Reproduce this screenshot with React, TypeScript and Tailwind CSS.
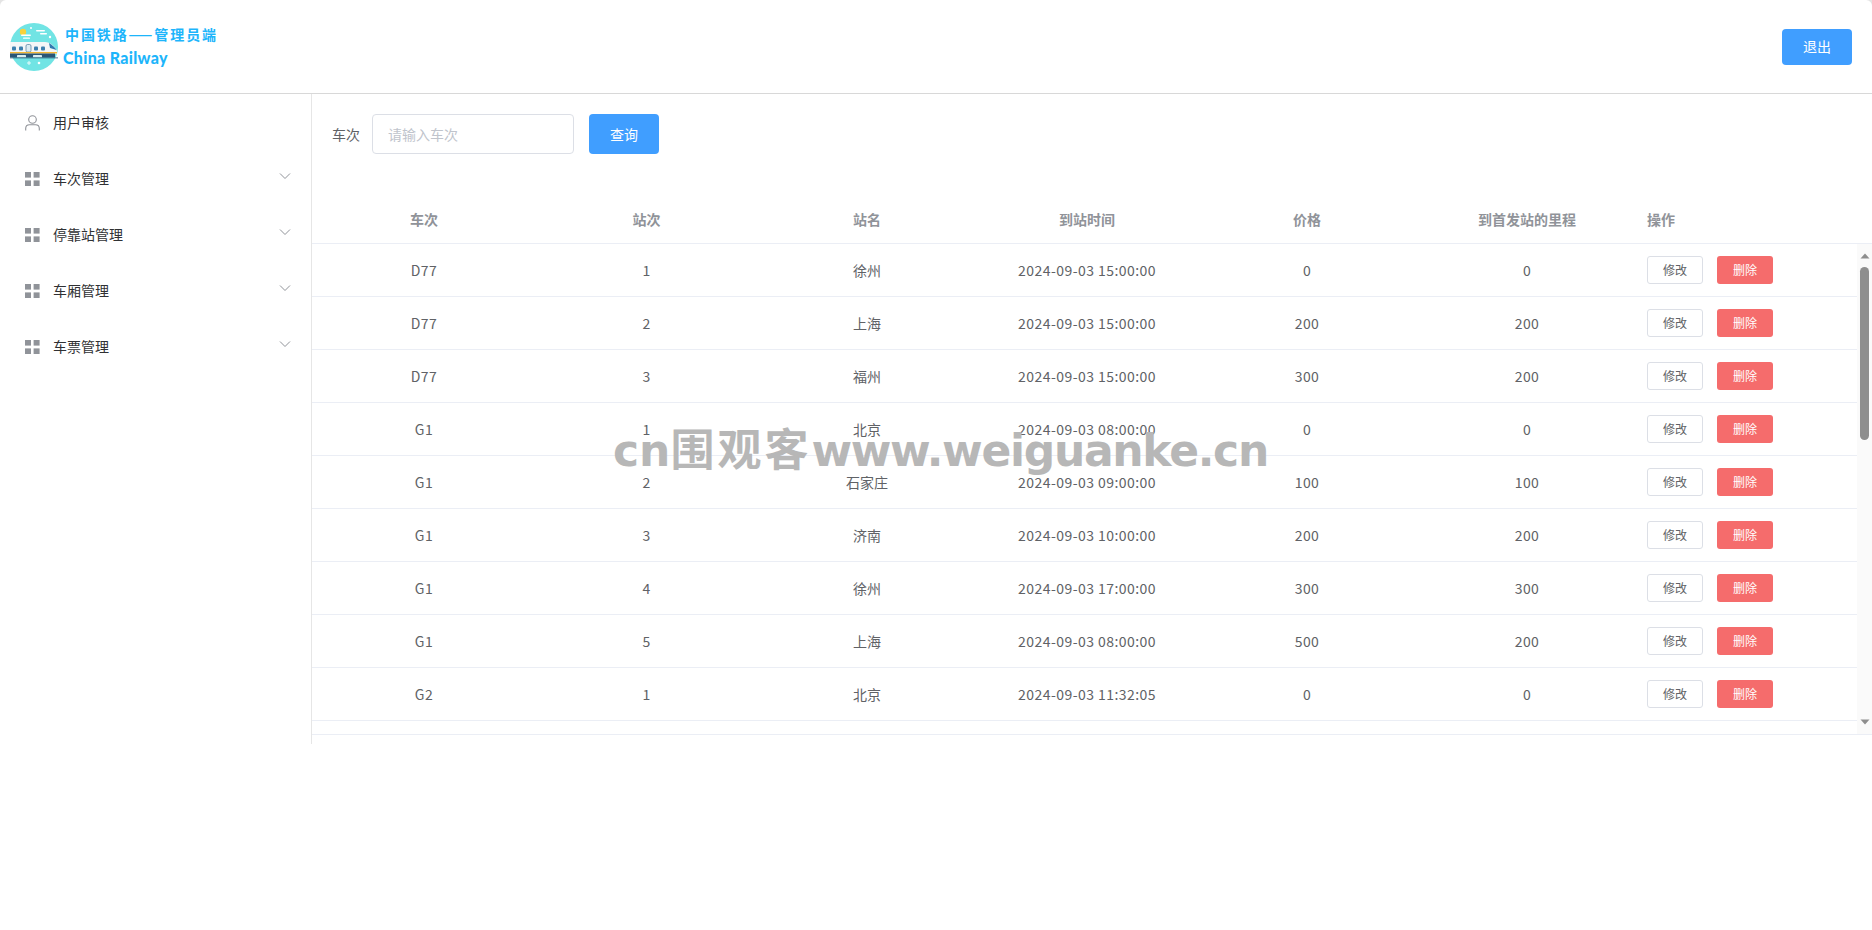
import React from "react";

const rows: (string | number)[][] = [
  ["D77", 1, "徐州", "2024-09-03 15:00:00", 0, 0],
  ["D77", 2, "上海", "2024-09-03 15:00:00", 200, 200],
  ["D77", 3, "福州", "2024-09-03 15:00:00", 300, 200],
  ["G1", 1, "北京", "2024-09-03 08:00:00", 0, 0],
  ["G1", 2, "石家庄", "2024-09-03 09:00:00", 100, 100],
  ["G1", 3, "济南", "2024-09-03 10:00:00", 200, 200],
  ["G1", 4, "徐州", "2024-09-03 17:00:00", 300, 300],
  ["G1", 5, "上海", "2024-09-03 08:00:00", 500, 200],
  ["G2", 1, "北京", "2024-09-03 11:32:05", 0, 0],
];

const headers = ["车次", "站次", "站名", "到站时间", "价格", "到首发站的里程"];
const menus = ["车次管理", "停靠站管理", "车厢管理", "车票管理"];

function GridIcon() {
  return (
    <svg width="15" height="14" viewBox="0 0 15 14" className="shrink-0" fill="#909399">
      <rect x="0" y="0" width="6" height="5.6" />
      <rect x="8.6" y="0" width="6" height="5.6" />
      <rect x="0" y="8.4" width="6" height="5.6" />
      <rect x="8.6" y="8.4" width="6" height="5.6" />
    </svg>
  );
}

function Chevron() {
  return (
    <svg width="12" height="12" viewBox="0 0 12 12" fill="none" stroke="#909399" strokeWidth="1" className="shrink-0 -translate-y-[3px]">
      <path d="M1 3.5 L6 8.5 L11 3.5" />
    </svg>
  );
}

function UserIcon() {
  return (
    <svg width="15" height="16" viewBox="0 0 15 16" fill="none" stroke="#909399" strokeWidth="1.1" className="shrink-0">
      <circle cx="7.5" cy="4.5" r="3.8" />
      <path d="M0.7 15.5 V13.5 C0.7 11 2.5 9.7 4.5 9.7 H10.5 C12.5 9.7 14.3 11 14.3 13.5 V15.5" />
    </svg>
  );
}

function Logo() {
  return (
    <svg width="50" height="50" viewBox="0 0 50 50" className="shrink-0">
      <defs>
        <clipPath id="c">
          <circle cx="25" cy="25" r="24" />
        </clipPath>
      </defs>
      <circle cx="25" cy="25" r="24" fill="#71e4e4" />
      <g clipPath="url(#c)">
        <circle cx="14" cy="10" r="3.2" fill="#f8d23a" />
        <rect x="12" y="12.5" width="10" height="1.6" rx="0.8" fill="#ffffff" />
        <rect x="14" y="15.5" width="7" height="1.3" rx="0.6" fill="#ffffff" />
        <rect x="27" y="8" width="9" height="1.6" rx="0.8" fill="#ffffff" />
        <rect x="31" y="11" width="7" height="1.4" rx="0.7" fill="#ffffff" />
        <circle cx="22" cy="6" r="1" fill="#ffffff" />
        <circle cx="41" cy="15" r="1.2" fill="#ffffff" />
        <path d="M18 41 h4 M20 39 v4" stroke="#ffffff" strokeWidth="0.8" />
        <circle cx="30" cy="41" r="1.3" fill="#ffffff" />
      </g>
      <path d="M1 20 H36 C41 20 46 24 48 29 V32 H1 Z" fill="#f4f6f7" />
      <path d="M40 21 C43 23 46 25 47.5 28 L41 26 Z" fill="#2f7ab0" />
      <rect x="3" y="24.5" width="4" height="4" rx="1" fill="#3c7fae" />
      <rect x="10" y="24.5" width="4" height="4" rx="1" fill="#3c7fae" />
      <rect x="17" y="22.5" width="5" height="7.5" rx="1.5" fill="#dcebf3" stroke="#34678c" strokeWidth="0.6" />
      <rect x="25" y="24.5" width="4" height="4" rx="1" fill="#3c7fae" />
      <rect x="32" y="24.5" width="4" height="4" rx="1" fill="#3c7fae" />
      <rect x="1" y="30" width="47" height="1.5" fill="#f2b632" />
      <rect x="1" y="31.5" width="45" height="4" fill="#2a5675" />
      <rect x="8" y="33" width="9" height="2.5" rx="0.6" fill="#d8eef2" />
      <rect x="24" y="33" width="9" height="2.5" rx="0.6" fill="#d8eef2" />
      <rect x="1" y="35.5" width="48" height="0.8" fill="#2a5675" />
    </svg>
  );
}

const colClass = [
  "w-[224px]",
  "w-[221px]",
  "w-[220px]",
  "w-[220px]",
  "w-[220px]",
  "w-[220px]",
];

function Ops({ labelled }: { labelled: boolean }) {
  return (
    <div className="pl-[10px] flex gap-[14px]">
      <button className="w-[56px] h-[28px] rounded-[3px] border border-[#dcdfe6] bg-white text-[12px] text-[#606266]">{labelled ? "修改" : ""}</button>
      <button className="w-[56px] h-[28px] rounded-[3px] bg-[#f56c6c] text-[12px] text-white">{labelled ? "删除" : ""}</button>
    </div>
  );
}

export default function App() {
  return (
    <div className="w-[1872px] h-[930px] bg-[#e4e4e4] overflow-hidden relative font-['Noto_Sans_CJK_SC',sans-serif] text-[14px]">
      <div className="h-full bg-white rounded-t-[6px]">
        <header className="h-[94px] border-b border-[#d8d8d8] flex items-center justify-between pl-[9px] pr-[20px]">
          <div className="flex items-center gap-[4px]">
            <Logo />
            <div className="flex flex-col text-[#1db5fb] font-bold -mt-[1px]">
              <span className="text-[14px] leading-[24px] tracking-[1.9px] pl-[2px]">中国铁路——管理员端</span>
              <span className="text-[16px] leading-[24px] tracking-[0.3px] font-['Lato',sans-serif] font-black">China Railway</span>
            </div>
          </div>
          <button className="w-[70px] h-[36px] rounded-[4px] bg-[#409eff] text-white text-[14px]">退出</button>
        </header>
        <div className="flex h-[650px]">
          <aside className="w-[312px] shrink-0 border-r border-[#e6e6e6] pt-[1px] text-[#303133]">
            <div className="h-[56px] flex items-center pl-[25px] gap-[13px] pr-[20px]">
              <UserIcon />
              <span className="-translate-y-[1px]">用户审核</span>
            </div>
            {menus.map((m) => (
              <div key={m} className="h-[56px] flex items-center pl-[25px] pr-[20px]">
                <GridIcon />
                <span className="ml-[13px] flex-1 -translate-y-[1px]">{m}</span>
                <Chevron />
              </div>
            ))}
          </aside>
          <main className="flex-1 min-w-0 flex flex-col">
            <div className="h-[103px] shrink-0 pl-[20px] pt-[20px] flex items-start">
              <span className="text-[#606266] h-[40px] leading-[40px] mr-[12px]">车次</span>
              <div className="w-[202px] h-[40px] rounded-[4px] border border-[#dcdfe6] px-[15px] flex items-center text-[#c0c4cc]">请输入车次</div>
              <button className="ml-[15px] w-[70px] h-[40px] rounded-[4px] bg-[#409eff] text-white">查询</button>
            </div>
            <div className="h-[47px] shrink-0 flex items-center border-b border-[#ebeef5] font-bold text-[#909399]">
              {headers.map((h, i) => (
                <div key={h} className={`${colClass[i]} shrink-0 text-center -translate-y-[1px]`}>{h}</div>
              ))}
              <div className="pl-[10px] -translate-y-[1px]">操作</div>
            </div>
            <div className="h-[491px] shrink-0 flex border-b border-[#ebeef5]">
              <div className="flex-1 min-w-0 overflow-hidden">
                {rows.map((r, idx) => (
                  <div key={idx} className="h-[53px] shrink-0 flex items-center border-b border-[#ebeef5] text-[#606266]">
                    {r.map((c, i) => (
                      <div key={i} className={`${colClass[i]} shrink-0 text-center ${i === 2 ? "" : "tracking-[0.45px]"}`}>{c}</div>
                    ))}
                    <Ops labelled />
                  </div>
                ))}
                <div className="h-[53px] flex items-center">
                  <div className="w-[1325px] shrink-0" />
                  <Ops labelled={false} />
                </div>
              </div>
              <div className="w-[15px] shrink-0 bg-[#fafafa] flex flex-col items-center">
                <svg width="10" height="6" viewBox="0 0 10 6" className="mt-[9px] shrink-0" fill="#8e8e8e"><path d="M5 0.5 L9.5 5.5 H0.5 Z" /></svg>
                <div className="w-[9px] h-[173px] rounded-[5px] bg-[#8e8e8e] mt-[8px]" />
                <div className="flex-1" />
                <svg width="10" height="6" viewBox="0 0 10 6" className="mb-[9px] shrink-0" fill="#8e8e8e"><path d="M5 5.5 L9.5 0.5 H0.5 Z" /></svg>
              </div>
            </div>
          </main>
        </div>
      </div>
      <div className="absolute left-[613px] top-[415px] leading-[64px] font-bold text-[#b7b7b7] whitespace-nowrap">
        <span className="text-[44px] font-['DejaVu_Sans',sans-serif]">cn</span>
        <span className="text-[44px] tracking-[3px]">围观客</span>
        <span className="text-[44px] tracking-[-1.3px] font-['DejaVu_Sans',sans-serif]">www.weiguanke.cn</span>
      </div>
    </div>
  );
}
